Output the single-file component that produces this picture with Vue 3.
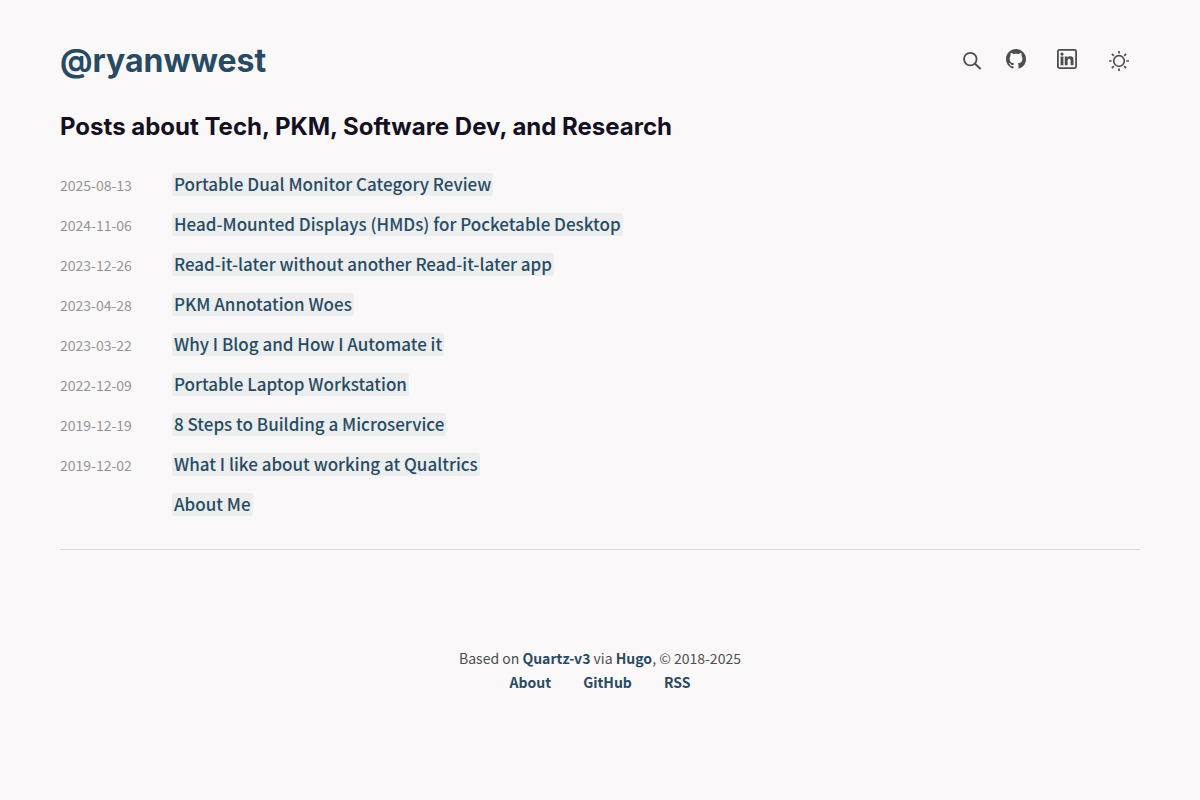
<script setup>
const posts = [
  { date: '2025-08-13', title: 'Portable Dual Monitor Category Review' },
  { date: '2024-11-06', title: 'Head-Mounted Displays (HMDs) for Pocketable Desktop' },
  { date: '2023-12-26', title: 'Read-it-later without another Read-it-later app' },
  { date: '2023-04-28', title: 'PKM Annotation Woes' },
  { date: '2023-03-22', title: 'Why I Blog and How I Automate it' },
  { date: '2022-12-09', title: 'Portable Laptop Workstation' },
  { date: '2019-12-19', title: '8 Steps to Building a Microservice' },
  { date: '2019-12-02', title: 'What I like about working at Qualtrics' },
  { date: '', title: 'About Me' },
]
const footerLinks = ['About', 'GitHub', 'RSS']
</script>

<template>
  <div class="page">
    <header class="header">
      <h1 class="brand"><a href="#">@ryanwwest</a></h1>
      <nav class="tools" aria-label="Site tools">
        <button type="button" class="tool search" aria-label="Search">
          <svg viewBox="0 0 20 20" width="20" height="20" fill="none" stroke="currentColor" stroke-width="1.8">
            <circle cx="8.3" cy="8.1" r="6.3" />
            <path d="M12.8 12.6 18.6 18" stroke-width="2" />
          </svg>
        </button>
        <a href="#" class="tool github" aria-label="GitHub profile">
          <svg viewBox="0 0 16 16" width="20" height="20" fill="currentColor">
            <path d="M8 0C3.58 0 0 3.58 0 8c0 3.54 2.29 6.53 5.47 7.59.4.07.55-.17.55-.38 0-.19-.01-.82-.01-1.49-2.01.37-2.53-.49-2.69-.94-.09-.23-.48-.94-.82-1.13-.28-.15-.68-.52-.01-.53.63-.01 1.08.58 1.23.82.72 1.21 1.87.87 2.33.66.07-.52.28-.87.51-1.07-1.78-.2-3.64-.89-3.64-3.95 0-.87.31-1.59.82-2.15-.08-.2-.36-1.02.08-2.12 0 0 .67-.21 2.2.82.64-.18 1.32-.27 2-.27s1.36.09 2 .27c1.53-1.04 2.2-.82 2.2-.82.44 1.1.16 1.92.08 2.12.51.56.82 1.27.82 2.15 0 3.07-1.87 3.75-3.65 3.95.29.25.54.73.54 1.48 0 1.07-.01 1.93-.01 2.2 0 .21.15.46.55.38A8.01 8.01 0 0 0 16 8c0-4.42-3.58-8-8-8z" />
          </svg>
        </a>
        <a href="#" class="tool linkedin" aria-label="LinkedIn profile">
          <svg viewBox="0 0 20 20" width="20" height="20" fill="currentColor">
            <rect x=".9" y=".9" width="18.2" height="18.2" rx="1.5" fill="none" stroke="currentColor" stroke-width="1.8" />
            <circle cx="5" cy="5.1" r="1.6" />
            <path d="M3.6 7.5h2.8v8.8H3.6zM7.8 7.5h2.8v1.2c.5-.9 1.4-1.4 2.6-1.4 2.7 0 3.3 1.6 3.3 3.9v5.1h-2.9v-4.4c0-1.2-.1-2.2-1.4-2.2-1.4 0-1.6 1-1.6 2.2v4.4H7.8z" />
          </svg>
        </a>
        <button type="button" class="tool theme" aria-label="Toggle dark mode">
          <svg viewBox="0 0 20 20" width="20" height="20" fill="none" stroke="currentColor" stroke-width="1.7">
            <circle cx="10" cy="10" r="5.3" />
            <path d="M10 0v2.6M10 17.4V20M0 10h2.6M17.4 10H20M2.9 2.9l1.9 1.9M15.2 15.2l1.9 1.9M17.1 2.9l-1.9 1.9M4.8 15.2l-1.9 1.9" />
          </svg>
        </button>
      </nav>
    </header>

    <main>
      <h2 class="heading">Posts about Tech, PKM, Software Dev, and Research</h2>
      <ul class="posts">
        <li v-for="post in posts" :key="post.title" class="post">
          <time class="date" :datetime="post.date || undefined">{{ post.date }}</time>
          <h3 class="title"><a href="#">{{ post.title }}</a></h3>
        </li>
      </ul>
    </main>

    <footer class="footer">
      <p>Based on <a href="#">Quartz-v3</a> via <a href="#">Hugo</a>, © 2018-2025</p>
      <ul class="links">
        <li v-for="name in footerLinks" :key="name"><a href="#">{{ name }}</a></li>
      </ul>
    </footer>
  </div>
</template>

<style>
body {
  margin: 0;
  background: #faf8f9;
}
</style>

<style scoped>
.page {
  padding: 40px 60px;
  font-family: "Source Sans Pro", "Noto Sans CJK SC", sans-serif;
  color: #4e4e4e;
}

a {
  color: #284b63;
  text-decoration: none;
  font-weight: 600;
}

h1,
h2,
h3,
p,
ul {
  margin: 0;
  padding: 0;
}

ul {
  list-style: none;
}

.header {
  display: flex;
  align-items: center;
  justify-content: space-between;
}

.brand {
  font: 700 32px/42px Inter, sans-serif;
}

.brand a {
  font-weight: 700;
}

.tools {
  display: flex;
  align-items: center;
  gap: 31px;
  padding-right: 11px;
}

.tool {
  display: block;
  height: 20px;
  padding: 0;
  border: 0;
  background: none;
  color: #4e4e4e;
  cursor: pointer;
}

.tool svg {
  display: block;
}

.search {
  margin-right: -7px;
}

.github,
.linkedin {
  margin-bottom: 4px;
}

.linkedin {
  margin-right: 1px;
}

.heading {
  margin-top: 30px;
  font: 700 24px/30px Inter, sans-serif;
  color: #141021;
}

.posts {
  margin-top: 22px;
  padding-bottom: 25px;
  border-bottom: 1px solid #d8d8d9;
}

.post {
  display: flex;
  height: 40px;
  align-items: center;
}

.date {
  width: 112px;
  padding-top: 2px;
  font-size: 14px;
  color: #959595;
}

.title {
  font-size: 17px;
}

.title a {
  display: block;
  padding: 0 2px 2px;
  border-radius: 3px;
  background: #ebedee;
  font-weight: 500;
  line-height: 21px;
}

.footer {
  padding: 96px 0 64px;
  text-align: center;
  font-size: 14px;
  line-height: 24px;
}

.links {
  display: flex;
  justify-content: center;
  gap: 32px;
}
</style>
